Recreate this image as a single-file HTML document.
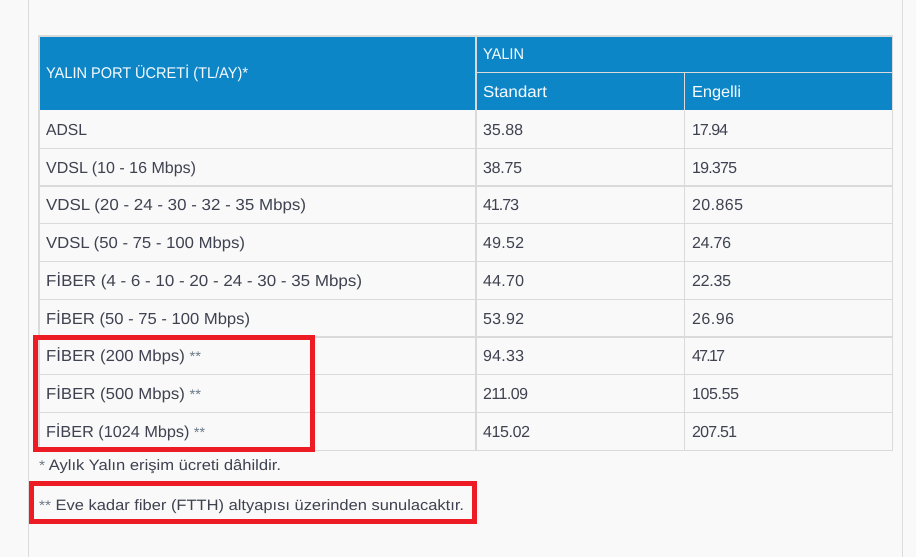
<!DOCTYPE html>
<html lang="tr">
<head>
<meta charset="utf-8">
<title>Yalın Port Ücreti</title>
<style>
html,body{margin:0;padding:0;background:#f9f9f9;}
body{width:916px;height:557px;overflow:hidden;position:relative;}
svg{position:absolute;left:0;top:0;display:block;}
text{font-family:"Liberation Sans",sans-serif;font-size:16px;fill:#3f4250;text-rendering:geometricPrecision;}
.h{fill:#f4fafd;font-size:15.5px;}
.s{fill:#f4fafd;font-size:16px;}
.n{font-size:16px;}
.f{font-size:15px;}
.a{fill:#6b7a88;font-size:14px;}
</style>
</head>
<body>
<svg width="916" height="557" viewBox="0 0 916 557" xmlns="http://www.w3.org/2000/svg">
<rect width="916" height="557" fill="#f9f9f9"/>
<!-- page rails -->
<rect x="28" y="0" width="1" height="557" fill="#dcdcdc"/>
<rect x="902" y="0" width="1" height="557" fill="#dcdcdc"/>
<!-- table header -->
<rect x="40" y="37" width="852" height="73" fill="#0d86c8"/>
<!-- table outer borders -->
<rect x="38" y="35" width="855" height="2" fill="#dadada"/>
<rect x="38" y="35" width="2" height="416" fill="#dadada"/>
<rect x="892" y="35" width="1" height="416" fill="#dadada"/>
<!-- vertical dividers -->
<rect x="475" y="35" width="2" height="416" fill="#dadada"/>
<rect x="684" y="72" width="1" height="379" fill="#dadada"/>
<!-- horizontal lines -->
<rect x="477" y="72" width="415" height="1" fill="#dadada"/>
<rect x="40" y="148" width="852" height="1" fill="#dadada"/>
<rect x="40" y="185" width="852" height="2" fill="#dadada"/>
<rect x="40" y="223" width="852" height="1" fill="#dadada"/>
<rect x="40" y="261" width="852" height="1" fill="#dadada"/>
<rect x="40" y="299" width="852" height="1" fill="#dadada"/>
<rect x="40" y="336" width="852" height="2" fill="#dadada"/>
<rect x="40" y="374" width="852" height="1" fill="#dadada"/>
<rect x="40" y="412" width="852" height="1" fill="#dadada"/>
<rect x="40" y="450" width="852" height="1" fill="#dadada"/>
<!-- header text -->
<text class="h" x="46" y="78" textLength="202" lengthAdjust="spacingAndGlyphs">YALIN PORT ÜCRETİ (TL/AY)*</text>
<text class="h" x="483" y="59" textLength="41" lengthAdjust="spacingAndGlyphs">YALIN</text>
<text class="s" x="483" y="97" textLength="64" lengthAdjust="spacingAndGlyphs">Standart</text>
<text class="s" x="692" y="97" textLength="49" lengthAdjust="spacingAndGlyphs">Engelli</text>
<!-- first column -->
<text x="46" y="135" textLength="41" lengthAdjust="spacingAndGlyphs">ADSL</text>
<text x="46" y="173" textLength="150" lengthAdjust="spacingAndGlyphs">VDSL (10 - 16 Mbps)</text>
<text x="46" y="210" textLength="260" lengthAdjust="spacingAndGlyphs">VDSL (20 - 24 - 30 - 32 - 35 Mbps)</text>
<text x="46" y="248" textLength="199" lengthAdjust="spacingAndGlyphs">VDSL (50 - 75 - 100 Mbps)</text>
<text x="46" y="286" textLength="316" lengthAdjust="spacingAndGlyphs">FİBER (4 - 6 - 10 - 20 - 24 - 30 - 35 Mbps)</text>
<text x="46" y="324" textLength="204" lengthAdjust="spacingAndGlyphs">FİBER (50 - 75 - 100 Mbps)</text>
<text x="46" y="361" textLength="155" lengthAdjust="spacingAndGlyphs">FİBER (200 Mbps) <tspan class="a">**</tspan></text>
<text x="46" y="399" textLength="155" lengthAdjust="spacingAndGlyphs">FİBER (500 Mbps) <tspan class="a">**</tspan></text>
<text x="46" y="437" textLength="159" lengthAdjust="spacingAndGlyphs">FİBER (1024 Mbps) <tspan class="a">**</tspan></text>
<!-- Standart column -->
<text class="n" x="483" y="135" textLength="40" lengthAdjust="spacing">35.88</text>
<text class="n" x="483" y="173" textLength="39" lengthAdjust="spacing">38.75</text>
<text class="n" x="483" y="210" textLength="36" lengthAdjust="spacing">41.73</text>
<text class="n" x="483" y="248" textLength="41" lengthAdjust="spacing">49.52</text>
<text class="n" x="483" y="286" textLength="41" lengthAdjust="spacing">44.70</text>
<text class="n" x="483" y="324" textLength="41" lengthAdjust="spacing">53.92</text>
<text class="n" x="483" y="361" textLength="41" lengthAdjust="spacing">94.33</text>
<text class="n" x="483" y="399" textLength="45" lengthAdjust="spacing">211.09</text>
<text class="n" x="483" y="437" textLength="47" lengthAdjust="spacing">415.02</text>
<!-- Engelli column -->
<text class="n" x="692" y="135" textLength="36" lengthAdjust="spacing">17.94</text>
<text class="n" x="692" y="173" textLength="45" lengthAdjust="spacing">19.375</text>
<text class="n" x="692" y="210" textLength="51" lengthAdjust="spacing">20.865</text>
<text class="n" x="692" y="248" textLength="39" lengthAdjust="spacing">24.76</text>
<text class="n" x="692" y="286" textLength="39" lengthAdjust="spacing">22.35</text>
<text class="n" x="692" y="324" textLength="42" lengthAdjust="spacing">26.96</text>
<text class="n" x="692" y="361" textLength="33" lengthAdjust="spacing">47.17</text>
<text class="n" x="692" y="399" textLength="47" lengthAdjust="spacing">105.55</text>
<text class="n" x="692" y="437" textLength="45" lengthAdjust="spacing">207.51</text>
<!-- footnotes -->
<text class="f" x="39" y="470" textLength="242" lengthAdjust="spacingAndGlyphs"><tspan class="a">*</tspan> Aylık Yalın erişim ücreti dâhildir.</text>
<text class="f" x="39" y="510" textLength="425" lengthAdjust="spacingAndGlyphs"><tspan class="a">**</tspan> Eve kadar fiber (FTTH) altyapısı üzerinden sunulacaktır.</text>
<!-- red annotation boxes -->
<rect x="35.5" y="337.5" width="277" height="112" fill="none" stroke="#ed1c24" stroke-width="5"/>
<rect x="31.5" y="483.5" width="443" height="38" fill="none" stroke="#ed1c24" stroke-width="5"/>
</svg>
</body>
</html>
